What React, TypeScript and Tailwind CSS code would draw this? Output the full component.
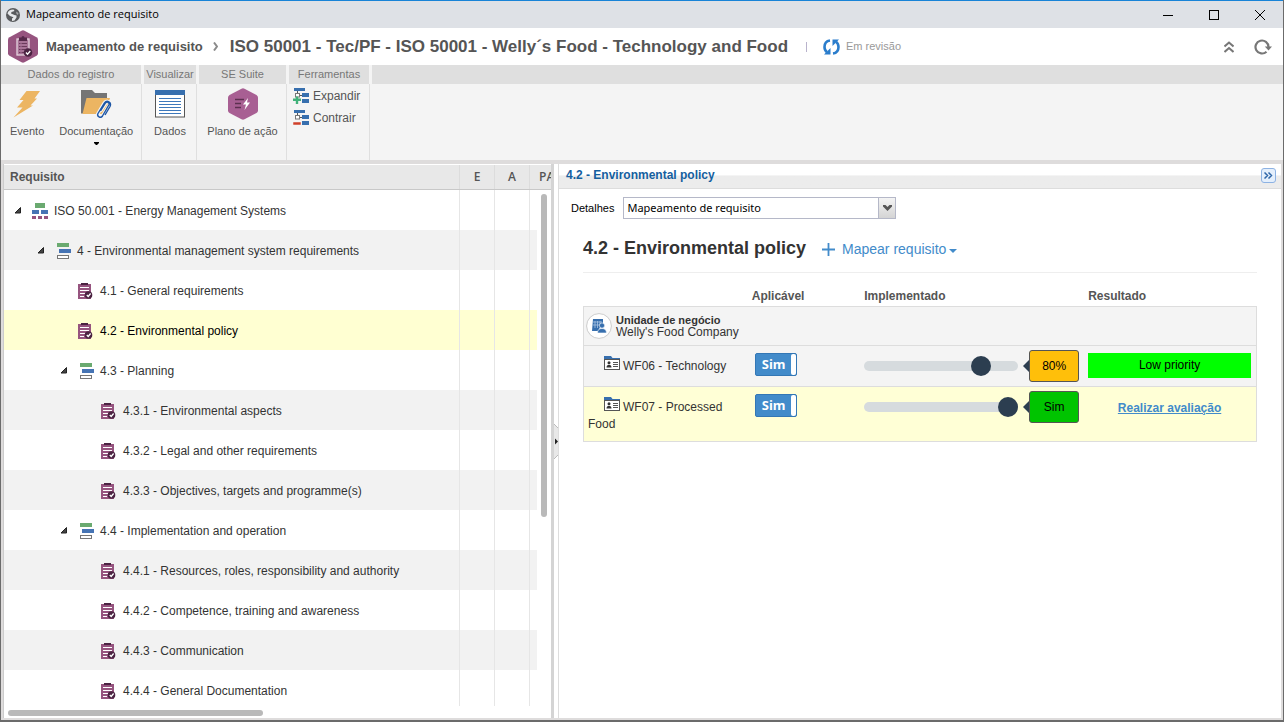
import { useState } from "react";
import type { ReactNode } from "react";

type RequirementKind = "root" | "group" | "item";

type Requirement = {
  label: string;
  level: number;
  kind: RequirementKind;
};

type BusinessUnit = {
  name: string;
  progress: number;
  rating: string;
  ratingClass: string;
  rowClass: string;
  priority?: string;
};

const requirements: Requirement[] = [
  { label: "ISO 50.001 - Energy Management Systems", level: 0, kind: "root" },
  { label: "4 - Environmental management system requirements", level: 1, kind: "group" },
  { label: "4.1 - General requirements", level: 2, kind: "item" },
  { label: "4.2 - Environmental policy", level: 2, kind: "item" },
  { label: "4.3 - Planning", level: 2, kind: "group" },
  { label: "4.3.1 - Environmental aspects", level: 3, kind: "item" },
  { label: "4.3.2 - Legal and other requirements", level: 3, kind: "item" },
  { label: "4.3.3 - Objectives, targets and programme(s)", level: 3, kind: "item" },
  { label: "4.4 - Implementation and operation", level: 2, kind: "group" },
  { label: "4.4.1 - Resources, roles, responsibility and authority", level: 3, kind: "item" },
  { label: "4.4.2 - Competence, training and awareness", level: 3, kind: "item" },
  { label: "4.4.3 - Communication", level: 3, kind: "item" },
  { label: "4.4.4 - General Documentation", level: 3, kind: "item" },
];

const units: BusinessUnit[] = [
  {
    name: "WF06 - Technology",
    progress: 80,
    rating: "80%",
    ratingClass: "bg-[#ffbf0a]",
    rowClass: "bg-[#f4f4f4]",
    priority: "Low priority",
  },
  {
    name: "WF07 - Processed Food",
    progress: 100,
    rating: "Sim",
    ratingClass: "bg-[#00c400]",
    rowClass: "bg-[#ffffd6]",
  },
];

const indents = ["pl-[10px]", "pl-[33px]", "pl-[56px]", "pl-[79px]"];

function GlobeIcon() {
  return (
    <svg width="14" height="14" viewBox="0 0 14 14">
      <circle cx="7" cy="7" r="7" fill="#595b5e" />
      <path d="M1.500 5.500C2 3 4 1.500 7.500 1.500L8.500 3 5.500 4l-.5 1.500L8.500 7l2 .5V9.500L8.500 12.500 6 13V10.500L7.500 9.200 4 8Z" fill="#e6e8eb" />
      <path d="M10 3.500 12.500 5 12 7 10.500 6Z" fill="#a5a7aa" />
    </svg>
  );
}

function ModuleIcon() {
  return (
    <svg width="30" height="33" viewBox="0 0 30 33">
      <path d="M13.500.7Q15 0 16.500.7L28.500 7.300Q30 8.200 30 9.800V23.200Q30 24.800 28.500 25.700L16.500 32.300Q15 33 13.500 32.300L1.500 25.700Q0 24.800 0 23.200V9.800Q0 8.200 1.500 7.300Z" fill="#96547f" />
      <rect x="9" y="9" width="12" height="16" fill="#a87397" stroke="#e3d3de" strokeWidth="1.300" />
      <path d="M11 7.500h2.500a1.500 1.500 0 0 1 3 0H19V11h-8Z" fill="#55294a" />
      <path d="M11 13.500h1.500m1 0H19m-8 3h1.500m1 0H19m-8 3h1.500m1 0H17m-6 3h1.500m1 0H16" stroke="#6b3a5c" />
      <circle cx="20" cy="22.500" r="4.300" fill="#4b2342" />
      <path d="m18 22.500 1.500 1.700 2.800-3.200" fill="none" stroke="#fff" strokeWidth="1.300" />
    </svg>
  );
}

function RevisionIcon() {
  return (
    <svg width="17" height="16" viewBox="0 0 17 16" fill="none">
      <path d="M7 1.500C3.500 2 1.500 4.500 1.500 8c0 2.200.8 4 2.500 5.300" stroke="#2b7dcc" strokeWidth="2.600" />
      <path d="M1 15.500h6.500V9Z" fill="#2b7dcc" />
      <path d="M10 14.500c3.500-.5 5.500-3 5.500-6.500 0-2.200-.8-4-2.500-5.300" stroke="#2b7dcc" strokeWidth="2.600" />
      <path d="M16 .5H9.500V7Z" fill="#2b7dcc" />
    </svg>
  );
}

function BoltIcon() {
  return (
    <svg width="28" height="28" viewBox="0 0 28 28">
      <path d="M13.500 1H27L21.500 8.500H24L17.500 15.500H20L.5 27.500 9.500 17.500H4L10.500 10H6.500Z" fill="#ecb562" />
    </svg>
  );
}

function FolderClipIcon() {
  return (
    <svg width="31" height="31" viewBox="0 0 31 31">
      <path d="M0 1h11l3 3h12v5H8L3 24.500H0Z" fill="#757575" />
      <path d="M5.500 9H29L24 25H1.500Z" fill="#ecb562" />
      <path d="m19.500 22 5.500-8.500c1.300-2 4.800-.3 3.500 2.200L21.500 27c-1.800 2.800-6 .5-4.500-2.500l6-10c2.300-4.500 8.500-1 6 3.500L24 26" fill="none" stroke="#f4f4f4" strokeWidth="3.500" />
      <path d="m19.500 22 5-8c1.500-2 4.500-.3 3.300 2L21.500 27c-1.800 2.800-6 .5-4.500-2.500l6.500-10.500c2.300-3.500 7.500-1 5.500 3.500L24 26" fill="none" stroke="#1c55a5" strokeWidth="1.400" />
    </svg>
  );
}

function DataIcon() {
  return (
    <svg width="30" height="28" viewBox="0 0 30 28">
      <rect x=".5" y=".5" width="29" height="26.500" fill="#fff" stroke="#555" />
      <path d="M0 0h30v5H0Z" fill="#376fae" />
      <path d="M4 8.500h22M4 11.500h22M4 14.500h22M4 17.500h22M4 20.500h22M4 23.500h22" stroke="#3d78bb" />
    </svg>
  );
}

function ActionPlanIcon() {
  return (
    <svg width="30" height="32" viewBox="0 0 30 32">
      <path d="M13.500.7Q15 0 16.500.7L28.500 7Q30 8 30 9.500V22.500Q30 24 28.500 25L16.500 31.300Q15 32 13.500 31.300L1.500 25Q0 24 0 22.500V9.500Q0 8 1.500 7Z" fill="#a85f93" />
      <path d="M7 11.500h9M7 15.500h6M7 19.500h6" stroke="#5c3050" strokeWidth="1.300" />
      <path d="m20 10-5 6.500h3L16.500 22l5.500-7.500h-3Z" fill="#fff" />
    </svg>
  );
}

function TreeToolIcon({ collapse }: { collapse?: boolean }) {
  return (
    <svg width="16" height="16" viewBox="0 0 16 16">
      <path d="M1 0h11v3H1ZM9 5h7v4H9ZM9 11h7v4H9Z" fill="#376fae" />
      <path d="M4.500 3v2M6 7.500h3" stroke="#555" />
      <rect x="2.500" y="5.500" width="4" height="3.500" fill="#fff" stroke="#777" />
      {collapse ? (
        <path d="M0 12h8v3H0Z" fill="#cf402a" stroke="#f4f4f4" strokeWidth=".5" />
      ) : (
        <path d="M0 10.500h2.800V8.500h2.400v2H8v2.500H5.200V16H2.800v-3H0Z" fill="#42b27a" />
      )}
    </svg>
  );
}

function RootIcon() {
  return (
    <svg width="16" height="16" viewBox="0 0 16 16">
      <path d="M3 0h10v5H3Z" fill="#6aaa70" />
      <path d="M0 7h7v4H0ZM9 7h7v4H9Z" fill="#4674b4" />
      <path d="M0 13h4v3H0ZM6 13h4v3H6ZM12 13h4v3h-4Z" fill="#96547f" />
    </svg>
  );
}

function GroupIcon() {
  return (
    <svg width="16" height="16" viewBox="0 0 16 16">
      <path d="M2 0h12v4H2Z" fill="#6aaa70" />
      <path d="M4 6h12v4H4Z" fill="#4674b4" />
      <rect x="2.500" y="12.500" width="11" height="3" fill="#fff" stroke="#777" />
    </svg>
  );
}

function ItemIcon() {
  return (
    <svg width="16" height="16" viewBox="0 0 16 16">
      <path d="M0 1h13v15H0Z" fill="#96547f" />
      <path d="M3 0h7v2H3Z" fill="#4b2342" />
      <path d="M2 4.500h9M2 7.500h9M2 10.500h5M2 13.500h4" stroke="#fff" />
      <circle cx="10.500" cy="12" r="3.800" fill="#4b2342" />
      <path d="m8.800 12 1.400 1.500 2.400-3" fill="none" stroke="#fff" strokeWidth="1.300" />
    </svg>
  );
}

function UnitIcon() {
  return (
    <svg width="26" height="26" viewBox="0 0 26 26">
      <circle cx="13" cy="13" r="12.400" fill="#fff" stroke="#ccc" />
      <path d="M7 6h10v8h-3l-1.500 4H6Z" fill="#376fae" />
      <path d="M9 8v7M11.500 8v7M14 8v5M7 9h9M7 12h9" stroke="#a9c4e2" strokeWidth=".8" />
      <circle cx="16" cy="12.500" r="2.600" fill="#376fae" stroke="#fff" strokeWidth=".6" />
      <path d="M11.500 20c0-3 1.500-4.500 4.500-4.500s4.500 1.500 4.500 4.500Z" fill="#376fae" stroke="#fff" strokeWidth=".6" />
    </svg>
  );
}

function CardIcon() {
  return (
    <svg width="16" height="14" viewBox="0 0 16 14" className="mr-[3px] inline-block align-baseline">
      <path d="M0 0h7l1.500 2H16v2H0Z" fill="#376fae" />
      <rect x=".5" y="3.500" width="15" height="10" fill="#fff" stroke="#555" />
      <circle cx="5" cy="6.700" r="1.500" fill="#333" />
      <path d="M2.500 11.500c0-2 1-2.800 2.500-2.800s2.500.8 2.500 2.800Z" fill="#333" />
      <path d="M9 6.500h5M9 8.500h5M9 10.500h5" stroke="#555" />
    </svg>
  );
}

const kindIcons = {
  root: <RootIcon />,
  group: <GroupIcon />,
  item: <ItemIcon />,
};

function TitleBar() {
  return (
    <div className="flex h-7 shrink-0 items-center border-t border-[#1883d7] bg-[#dee1e6] pl-[5px] font-['Open_Sans',sans-serif] text-[11px] text-black">
      <GlobeIcon />
      <span className="ml-[6px] flex-1">Mapeamento de requisito</span>
      <button aria-label="Minimizar" className="flex h-full w-[46px] items-center justify-center">
        <svg width="10" height="10" viewBox="0 0 10 10"><path d="M0 5.500h10" stroke="#000" /></svg>
      </button>
      <button aria-label="Maximizar" className="flex h-full w-[46px] items-center justify-center">
        <svg width="10" height="10" viewBox="0 0 10 10"><rect x=".5" y=".5" width="9" height="9" fill="none" stroke="#000" /></svg>
      </button>
      <button aria-label="Fechar" className="flex h-full w-[46px] items-center justify-center">
        <svg width="10" height="10" viewBox="0 0 10 10"><path d="m0 0 10 10M10 0 0 10" stroke="#000" /></svg>
      </button>
    </div>
  );
}

function PageHeader() {
  return (
    <header className="flex h-[37px] shrink-0 items-center bg-white pr-[11px] pl-[7px] text-[#555]">
      <ModuleIcon />
      <span className="ml-2 text-[13px] font-bold">Mapeamento de requisito</span>
      <svg width="5" height="9" viewBox="0 0 5 9" className="ml-[10px]">
        <path d="M1 .5 4 4.500 1 8.500" fill="none" stroke="#8a8a8a" strokeWidth="2" />
      </svg>
      <h1 className="ml-3 text-[17px] font-bold whitespace-nowrap">
        ISO 50001 - Tec/PF - ISO 50001 - Welly´s Food - Technology and Food
      </h1>
      <span className="ml-[18px] h-[10px] w-px bg-[#b9b3cc]" />
      <span className="ml-4 flex flex-1 items-center gap-[6px] text-[11px] text-[#999]">
        <RevisionIcon />
        Em revisão
      </span>
      <button aria-label="Recolher" className="mr-5">
        <svg width="10" height="12" viewBox="0 0 10 12" fill="none" stroke="#777" strokeWidth="2">
          <path d="m.5 5.500 4.500-4 4.500 4M.5 11 5 7l4.500 4" />
        </svg>
      </button>
      <button aria-label="Atualizar">
        <svg width="18" height="16" viewBox="0 0 18 16">
          <path d="M12.500 12.700A6.500 6.500 0 1 1 14.500 8" fill="none" stroke="#777" strokeWidth="2.200" />
          <path d="M10.800 7.500H18L14.500 11.500Z" fill="#777" />
        </svg>
      </button>
    </header>
  );
}

function RibbonGroup({ title, className, children }: { title: string; className: string; children: ReactNode }) {
  return (
    <section className={`flex shrink-0 flex-col ${className}`}>
      <h2 className="h-[19px] border-r-3 border-[#f4f4f4] bg-[#dfdfdf] text-center text-[11px] leading-[19px] text-[#777]">
        {title}
      </h2>
      <div className="mr-[2px] flex-1 border-r border-[#dfdfdf]">{children}</div>
    </section>
  );
}

function RibbonButton({ icon, label, menu }: { icon: ReactNode; label: string; menu?: boolean }) {
  return (
    <button className="flex flex-col items-center text-[11px] leading-[14px] text-[#555]">
      <span className="flex h-8 items-center justify-center">{icon}</span>
      <span className="mt-1">{label}</span>
      {menu && (
        <svg width="5" height="3" viewBox="0 0 5 3" className="mt-1">
          <path d="M0 0h5v1L3 3H2L0 1Z" fill="#000" />
        </svg>
      )}
    </button>
  );
}

function Ribbon() {
  return (
    <nav className="flex h-[95px] shrink-0 bg-[#f4f4f4]">
      <RibbonGroup title="Dados do registro" className="w-[143px]">
        <div className="flex gap-[15px] pt-1 pl-[9px]">
          <RibbonButton icon={<BoltIcon />} label="Evento" />
          <RibbonButton icon={<FolderClipIcon />} label="Documentação" menu />
        </div>
      </RibbonGroup>
      <RibbonGroup title="Visualizar" className="w-[55px]">
        <div className="flex justify-center pt-1">
          <RibbonButton icon={<DataIcon />} label="Dados" />
        </div>
      </RibbonGroup>
      <RibbonGroup title="SE Suite" className="w-[90px]">
        <div className="flex justify-center pt-1">
          <RibbonButton icon={<ActionPlanIcon />} label="Plano de ação" />
        </div>
      </RibbonGroup>
      <RibbonGroup title="Ferramentas" className="w-[83px]">
        <div className="flex flex-col items-start gap-[6px] pt-1 pl-1 text-xs text-[#555]">
          <button className="flex h-4 items-center gap-1">
            <TreeToolIcon />
            Expandir
          </button>
          <button className="flex h-4 items-center gap-1">
            <TreeToolIcon collapse />
            Contrair
          </button>
        </div>
      </RibbonGroup>
      <div className="h-[19px] flex-1 bg-[#dfdfdf]" />
    </nav>
  );
}

function RequirementTree({ selected, onSelect }: { selected: number; onSelect: (index: number) => void }) {
  const rowColor = (index: number) => {
    if (index === selected) return "bg-[#ffffd2] text-black";
    return index % 2 ? "bg-[#f2f2f2] text-[#333]" : "bg-white text-[#333]";
  };

  return (
    <section className="flex w-[548px] shrink-0 flex-col overflow-hidden border-l border-[#ccc] bg-white pt-px">
      <div className="flex h-[25px] shrink-0 overflow-hidden border-b border-[#c8c8c8] bg-[#e8e8e8] text-xs leading-6 font-bold text-[#555]">
        <span className="flex-1 pl-[6px]">Requisito</span>
        <span className="w-[35px] border-l border-[#dcdcdc] text-center font-['Open_Sans',sans-serif] font-semibold">E</span>
        <span className="w-[35px] border-l border-[#dcdcdc] text-center font-['Open_Sans',sans-serif] font-semibold">A</span>
        <span className="w-[22px] overflow-hidden border-l border-[#dcdcdc] pl-[9px] font-['Open_Sans',sans-serif] font-semibold">PA</span>
      </div>
      <div className="flex min-h-0 flex-1">
        <div className="flex-1 overflow-hidden">
          <table className="w-full table-fixed border-separate border-spacing-0 text-xs">
            <colgroup>
              <col />
              <col className="w-[35px]" />
              <col className="w-[35px]" />
              <col className="w-2" />
            </colgroup>
            <tbody>
              {requirements.map((item, index) => (
                <tr key={item.label} className={rowColor(index)} onClick={() => onSelect(index)}>
                  <td className={`h-10 p-0 ${indents[item.level]}`}>
                    <div className="flex items-center pt-[2px] whitespace-nowrap">
                      <span className="flex w-[18px] shrink-0 pb-[2px]">
                        {item.kind !== "item" && (
                          <svg width="8" height="7" viewBox="0 0 8 7">
                            <path d="M1 6 6.500.5V6Z" fill="#444" stroke="#222" />
                          </svg>
                        )}
                      </span>
                      {kindIcons[item.kind]}
                      <span className="ml-[6px]">{item.label}</span>
                    </div>
                  </td>
                  <td className="border-l border-[#e6e6e6]" />
                  <td className="border-l border-[#e6e6e6]" />
                  <td className="border-l border-[#e6e6e6]" />
                </tr>
              ))}
            </tbody>
          </table>
        </div>
        <div className="w-[14px] shrink-0 px-1 pt-1">
          <div className="h-[63%] w-[6px] rounded-full bg-[#b9b9b9]" />
        </div>
      </div>
      <div className="h-3 shrink-0 pt-1 pl-1">
        <div className="h-[6px] w-[255px] rounded-full bg-[#b9b9b9]" />
      </div>
    </section>
  );
}

function Splitter() {
  return (
    <div className="flex w-2 shrink-0 items-center border-r border-l-3 border-r-[#ddd] border-l-[#d4d4d4] bg-white">
      <button aria-label="Recolher painel" className="flex">
        <svg width="4" height="35" viewBox="0 0 4 35">
          <path d="M0 0 4 4V31L0 35Z" fill="#e8e8e8" />
          <path d="m0 0 4 4M0 35l4-4" stroke="#bbb" />
          <path d="m1 14.500 3 3-3 3Z" fill="#222" />
        </svg>
      </button>
    </div>
  );
}

function UnitRow({ unit }: { unit: BusinessUnit }) {
  const [applicable, setApplicable] = useState(true);
  const [progress, setProgress] = useState(unit.progress);

  return (
    <tr className={`border border-[#ddd] align-top ${unit.rowClass}`}>
      <td className="pt-[10px] pb-2 pl-1 indent-4 leading-[17px]">
        <CardIcon />
        {unit.name}
      </td>
      <td className="pt-[7px] pl-[3px]">
        <label className="flex h-[23px] w-[42px] items-center rounded-xs border border-[#3377b5] bg-[#428bca] pl-[6px] font-['Noto_Sans',sans-serif] text-[13px] font-bold text-white">
          <input
            type="checkbox"
            className="sr-only"
            aria-label={`Aplicável ${unit.name}`}
            checked={applicable}
            onChange={(e) => setApplicable(e.target.checked)}
          />
          <span className="flex-1">{applicable ? "Sim" : "Não"}</span>
          <span className="h-full w-[5px] rounded-xs bg-white" />
        </label>
      </td>
      <td className="pt-1 pb-1">
        <div className="flex h-8 items-center">
          <input
            type="range"
            aria-label={`Implementado ${unit.name}`}
            value={progress}
            onChange={(e) => setProgress(Number(e.target.value))}
            className="h-[10px] w-[154px] appearance-none rounded-full bg-[#d6dbde] [&::-webkit-slider-thumb]:size-5 [&::-webkit-slider-thumb]:appearance-none [&::-webkit-slider-thumb]:rounded-full [&::-webkit-slider-thumb]:bg-[#2c3e50]"
          />
          <svg width="6" height="12" viewBox="0 0 6 12" className="ml-[5px]">
            <path d="M6 0v12L0 6Z" fill="#2c3e50" />
          </svg>
          <span className={`flex h-8 w-[50px] items-center justify-center rounded-[3px] border border-[#555] text-black ${unit.ratingClass}`}>
            {unit.rating}
          </span>
        </div>
      </td>
      <td className="pt-[7px] pr-[5px] text-center">
        {unit.priority ? (
          <div className="h-[25px] bg-[#00ff00] leading-6 text-black">{unit.priority}</div>
        ) : (
          <a href="#avaliacao" className="leading-7 font-bold text-[#428bca] underline">
            Realizar avaliação
          </a>
        )}
      </td>
    </tr>
  );
}

function DetailPanel() {
  return (
    <section className="flex min-w-0 flex-1 flex-col bg-white">
      <div className="flex h-[25px] shrink-0 items-center justify-between border-b border-[#ddd] bg-linear-to-b from-white from-45% to-[#ececec] to-50% pr-[5px] pb-[2px] pl-[7px]">
        <h2 className="text-xs font-bold text-[#15609f]">4.2 - Environmental policy</h2>
        <button
          aria-label="Expandir painel"
          className="flex size-[15px] items-center justify-center rounded-[3px] border border-[#8db2e3] bg-[#e4effc]"
        >
          <svg width="9" height="7" viewBox="0 0 9 7" fill="none" stroke="#2f67a8" strokeWidth="1.500">
            <path d="m.5.500 3 3-3 3M4.500.500l3 3-3 3" />
          </svg>
        </button>
      </div>
      <div className="flex items-center gap-[9px] pt-2 pl-3">
        <label htmlFor="detalhes" className="text-[11px] text-black">
          Detalhes
        </label>
        <div className="relative">
          <select
            id="detalhes"
            className="block h-[22px] w-[273px] appearance-none border border-[#b5b8c8] bg-white pl-[3px] font-['Noto_Sans',sans-serif] text-[11px] text-black"
          >
            <option>Mapeamento de requisito</option>
          </select>
          <span className="pointer-events-none absolute inset-y-0 right-0 flex w-[18px] items-center justify-center border border-[#b5b8c8] bg-linear-to-b from-[#f4f4f4] to-[#d4d4d4]">
            <svg width="9" height="6" viewBox="0 0 9 6">
              <path d="M0 0h2.500l2 2 2-2H9v1.500L4.500 6 0 1.500Z" fill="#555" />
            </svg>
          </span>
        </div>
      </div>
      <div className="px-6 pt-[17px]">
        <div className="flex items-center border-b border-[#eee] pb-3">
          <h3 className="text-lg leading-6 font-bold text-[#333]">4.2 - Environmental policy</h3>
          <button className="ml-4 flex items-center pt-[2px] text-sm leading-5 text-[#428bca]">
            <svg width="13" height="13" viewBox="0 0 13 13" className="mr-[7px]">
              <path d="M6.500 0v13M0 6.500h13" stroke="#428bca" strokeWidth="1.800" />
            </svg>
            Mapear requisito
            <svg width="8" height="4" viewBox="0 0 8 4" className="mt-1 ml-[3px]">
              <path d="M0 0h8L4 4Z" fill="#428bca" />
            </svg>
          </button>
        </div>
        <table className="mt-3 w-full table-fixed border-collapse text-xs text-[#333]">
          <colgroup>
            <col className="w-[25%]" />
            <col className="w-[16.700%]" />
            <col className="w-[224px]" />
            <col />
          </colgroup>
          <thead>
            <tr className="text-left leading-[19px] text-[#555]">
              <td />
              <th className="pt-[2px] font-bold">Aplicável</th>
              <th className="pt-[2px] font-bold">Implementado</th>
              <th className="pt-[2px] font-bold">Resultado</th>
            </tr>
          </thead>
          <tbody>
            <tr className="border border-[#ddd] bg-[#f4f4f4]">
              <td colSpan={4} className="h-[39px] pl-[2px]">
                <div className="flex items-center gap-1">
                  <UnitIcon />
                  <div className="leading-3">
                    <div className="text-[11px] font-bold">Unidade de negócio</div>
                    <div>Welly's Food Company</div>
                  </div>
                </div>
              </td>
            </tr>
            {units.map((unit) => (
              <UnitRow key={unit.name} unit={unit} />
            ))}
          </tbody>
        </table>
      </div>
    </section>
  );
}

function App() {
  const [selected, setSelected] = useState(3);

  return (
    <div className="flex h-screen flex-col overflow-hidden border-x border-b-2 border-[#6b6b6b] bg-[#dedcdc] font-['Liberation_Sans',Arial,sans-serif]">
      <TitleBar />
      <PageHeader />
      <Ribbon />
      <main className="flex min-h-0 flex-1 pt-1 pr-[2px] pb-[2px] pl-[2px]">
        <RequirementTree selected={selected} onSelect={setSelected} />
        <Splitter />
        <DetailPanel />
      </main>
    </div>
  );
}

export default App;
